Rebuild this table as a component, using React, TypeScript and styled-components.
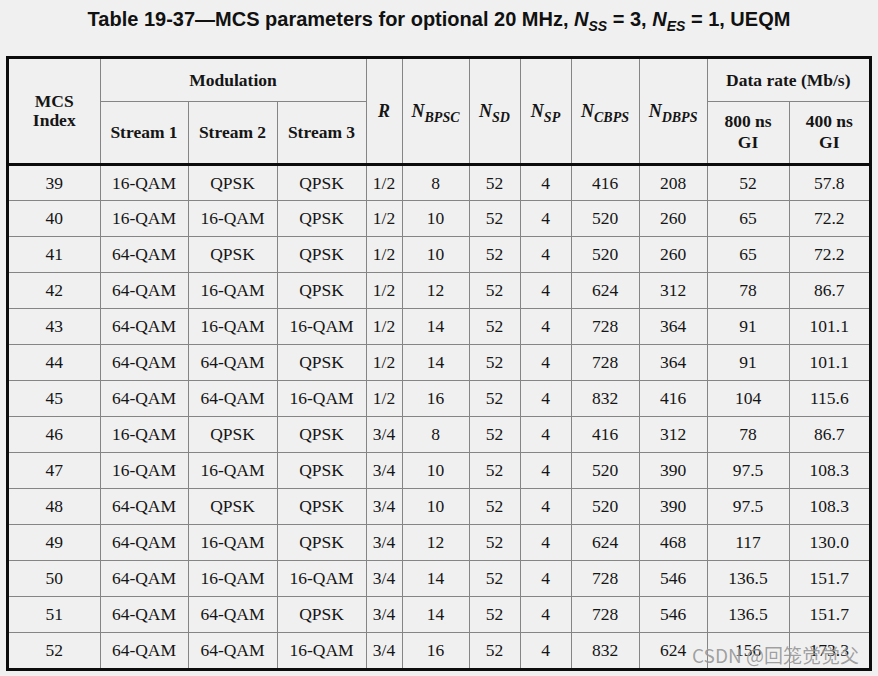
import React from 'react';
import styled, { createGlobalStyle } from 'styled-components';

const GlobalStyle = createGlobalStyle`
  html, body {
    margin: 0;
    padding: 0;
    background: #f0f0f0;
  }
`;

const Page = styled.div`
  position: relative;
  width: 878px;
  height: 676px;
  padding: 8px 6px 0;
  box-sizing: border-box;
  background: #f0f0f0;
`;

const Title = styled.h2`
  margin: 0;
  height: 48px;
  font-family: "Liberation Sans", Arial, sans-serif;
  font-weight: bold;
  font-size: 20px;
  line-height: 23px;
  color: #111;
  text-align: center;
`;

const TitleSym = styled.i`
  font-style: italic;
`;

const TitleSub = styled.sub`
  font-size: 14px;
  font-style: italic;
  vertical-align: -5px;
  line-height: 0;
`;

const Frame = styled.div`
  width: 866px;
  box-sizing: border-box;
  border: 3px solid #0c0c0c;
`;

const Table = styled.table`
  width: 860px;
  table-layout: fixed;
  border-collapse: collapse;
  border-style: hidden;
  font-family: "Liberation Serif", "Times New Roman", serif;
  font-size: 17.5px;
  color: #151515;

  tbody tr:first-child td {
    border-top: 3px solid #0c0c0c;
  }
`;

const HeadRow = styled.tr<{ $h: number }>`
  height: ${(p) => p.$h}px;
`;

const BodyRow = styled.tr`
  height: 36px;
`;

const Th = styled.th<{ $lh?: number }>`
  border: 1px solid #858585;
  padding: 0;
  text-align: center;
  vertical-align: middle;
  font-weight: bold;
  line-height: ${(p) => p.$lh ?? 20}px;
`;

const Td = styled.td`
  border: 1px solid #858585;
  padding: 0;
  text-align: center;
  vertical-align: middle;
  line-height: 20px;
`;

const Sym = styled.span`
  font-style: italic;
  font-weight: bold;
  font-size: 18px;
`;

const Sub = styled.sub`
  font-size: 14px;
  vertical-align: -5px;
  line-height: 0;
`;

const Watermark = styled.div`
  position: absolute;
  left: 692px;
  top: 642px;
  font-family: "Noto Sans CJK SC", "Liberation Sans", sans-serif;
  font-size: 19px;
  line-height: 26px;
  color: rgba(120, 120, 120, 0.7);
  white-space: nowrap;
  text-shadow: 0 0 1px rgba(255, 255, 255, 0.6);
`;

const widths = [91, 88, 89, 89, 36, 67, 51, 51, 68, 68, 82, 80];

const rows: string[][] = [
  ['39', '16-QAM', 'QPSK', 'QPSK', '1/2', '8', '52', '4', '416', '208', '52', '57.8'],
  ['40', '16-QAM', '16-QAM', 'QPSK', '1/2', '10', '52', '4', '520', '260', '65', '72.2'],
  ['41', '64-QAM', 'QPSK', 'QPSK', '1/2', '10', '52', '4', '520', '260', '65', '72.2'],
  ['42', '64-QAM', '16-QAM', 'QPSK', '1/2', '12', '52', '4', '624', '312', '78', '86.7'],
  ['43', '64-QAM', '16-QAM', '16-QAM', '1/2', '14', '52', '4', '728', '364', '91', '101.1'],
  ['44', '64-QAM', '64-QAM', 'QPSK', '1/2', '14', '52', '4', '728', '364', '91', '101.1'],
  ['45', '64-QAM', '64-QAM', '16-QAM', '1/2', '16', '52', '4', '832', '416', '104', '115.6'],
  ['46', '16-QAM', 'QPSK', 'QPSK', '3/4', '8', '52', '4', '416', '312', '78', '86.7'],
  ['47', '16-QAM', '16-QAM', 'QPSK', '3/4', '10', '52', '4', '520', '390', '97.5', '108.3'],
  ['48', '64-QAM', 'QPSK', 'QPSK', '3/4', '10', '52', '4', '520', '390', '97.5', '108.3'],
  ['49', '64-QAM', '16-QAM', 'QPSK', '3/4', '12', '52', '4', '624', '468', '117', '130.0'],
  ['50', '64-QAM', '16-QAM', '16-QAM', '3/4', '14', '52', '4', '728', '546', '136.5', '151.7'],
  ['51', '64-QAM', '64-QAM', 'QPSK', '3/4', '14', '52', '4', '728', '546', '136.5', '151.7'],
  ['52', '64-QAM', '64-QAM', '16-QAM', '3/4', '16', '52', '4', '832', '624', '156', '173.3'],
];

const NSym = ({ sub }: { sub: string }) => (
  <Sym>
    N<Sub>{sub}</Sub>
  </Sym>
);

const App = () => {
  return (
    <Page>
      <GlobalStyle />
      <Title>
        Table 19-37—MCS parameters for optional 20 MHz, <TitleSym>N</TitleSym>
        <TitleSub>SS</TitleSub> = 3, <TitleSym>N</TitleSym>
        <TitleSub>ES</TitleSub> = 1, UEQM
      </Title>
      <Frame>
        <Table>
          <colgroup>
            {widths.map((w, i) => (
              <col key={i} style={{ width: w }} />
            ))}
          </colgroup>
          <thead>
            <HeadRow $h={42}>
              <Th rowSpan={2} $lh={19}>
                MCS
                <br />
                Index
              </Th>
              <Th colSpan={3}>Modulation</Th>
              <Th rowSpan={2}>
                <Sym>R</Sym>
              </Th>
              <Th rowSpan={2}>
                <NSym sub="BPSC" />
              </Th>
              <Th rowSpan={2}>
                <NSym sub="SD" />
              </Th>
              <Th rowSpan={2}>
                <NSym sub="SP" />
              </Th>
              <Th rowSpan={2}>
                <NSym sub="CBPS" />
              </Th>
              <Th rowSpan={2}>
                <NSym sub="DBPS" />
              </Th>
              <Th colSpan={2}>Data rate (Mb/s)</Th>
            </HeadRow>
            <HeadRow $h={63}>
              <Th>Stream 1</Th>
              <Th>Stream 2</Th>
              <Th>Stream 3</Th>
              <Th $lh={21}>
                800 ns
                <br />
                GI
              </Th>
              <Th $lh={21}>
                400 ns
                <br />
                GI
              </Th>
            </HeadRow>
          </thead>
          <tbody>
            {rows.map((r) => (
              <BodyRow key={r[0]}>
                {r.map((c, i) => (
                  <Td key={i}>{c}</Td>
                ))}
              </BodyRow>
            ))}
          </tbody>
        </Table>
      </Frame>
      <Watermark>CSDN @回笼觉觉父</Watermark>
    </Page>
  );
};

export default App;
